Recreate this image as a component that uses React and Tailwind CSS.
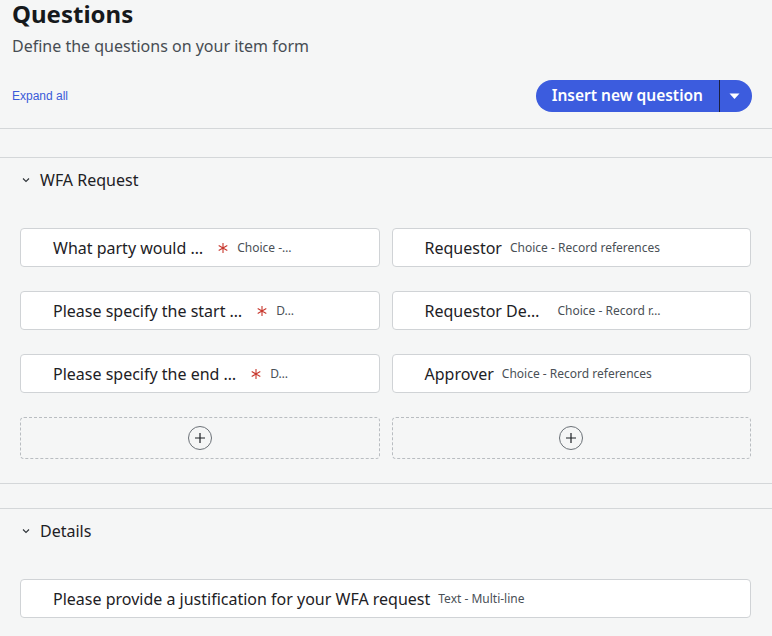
import React from "react";

const wfaQuestions = [
    { label: "What party would …", required: true, type: "Choice -…" },
    { label: "Requestor", required: false, type: "Choice - Record references" },
    { label: "Please specify the start …", required: true, type: "D…" },
    { label: "Requestor De…", required: false, type: "Choice - Record r…", wide: true },
    { label: "Please specify the end …", required: true, type: "D…" },
    { label: "Approver", required: false, type: "Choice - Record references" },
];

const Chevron = () => (
    <svg width="10" height="10" viewBox="0 0 10 10" className="text-[#2e3338]">
        <path d="M2 3.5 L5 6.5 L8 3.5" fill="none" stroke="currentColor" strokeWidth="1.1" />
    </svg>
);

// thin six-armed required marker
const Required = () => (
    <svg width="10" height="10" viewBox="0 0 10 10" className="ml-[15px] shrink-0">
        <path d="M5 0 V10 M0.7 2.5 L9.3 7.5 M0.7 7.5 L9.3 2.5" stroke="#c8372d" strokeWidth="1.1" />
    </svg>
);

const QuestionCard = ({ q }) => (
    <div className="h-[39px] flex items-center pl-[32px] pr-3 bg-white border border-[#d0d3d6] rounded-[4px]">
        <span className="text-[16px] text-[#1d2125] whitespace-nowrap">{q.label}</span>
        {q.required && <Required />}
        <span className={`${q.wide ? "ml-[18px]" : q.required ? "ml-[9px]" : "ml-2"} text-[12px] text-[#4a5056] whitespace-nowrap`}>{q.type}</span>
    </div>
);

const AddBox = () => (
    <div className="h-[42px] flex items-center justify-center border border-dashed border-[#b9bdc1] rounded-[4px]">
        <div className="w-6 h-6 rounded-full border border-[#6b7177] flex items-center justify-center">
            <svg width="12" height="12" viewBox="0 0 12 12">
                <path d="M6 1 V11 M1 6 H11" stroke="#1d2125" strokeWidth="1.2" />
            </svg>
        </div>
    </div>
);

const SectionHeader = ({ title }) => (
    <div className="flex items-center pl-[21px] pt-[10px] h-[34px]">
        <Chevron />
        <span className="ml-[9px] text-[16px] leading-6 text-[#1d2125]">{title}</span>
    </div>
);

export default function App() {
    return (
        <div className="w-[772px] h-[636px] overflow-hidden bg-[#f5f6f6] font-['Noto_Sans',sans-serif]">
            <div className="pl-3 pr-5 border-b border-[#d4d7d9] pb-4">
                <h1 className="text-[24px] leading-7 font-bold text-[#16191c]">Questions</h1>
                <p className="mt-2 text-[16px] leading-5 text-[#474d53]">Define the questions on your item form</p>
                <div className="mt-6 flex items-center justify-between h-8">
                    <a className="text-[12px] text-[#3a5bd9] font-['Liberation_Sans',sans-serif]">Expand all</a>
                    <div className="flex items-center h-8 rounded-full bg-[#3c5cde] text-white">
                        <span className="pl-4 pr-4 text-[15.5px] font-semibold">Insert new question</span>
                        <span className="w-px h-8 bg-[#1b2040]" />
                        <span className="w-8 flex items-center justify-center pr-1">
                            <svg width="11" height="7" viewBox="0 0 11 7">
                                <path d="M0.5 0.5 H10.5 L5.5 6 Z" fill="white" />
                            </svg>
                        </span>
                    </div>
                </div>
            </div>

            <div className="h-[28px]" />

            <section className="border-t border-b border-[#d4d7d9] pb-6">
                <SectionHeader title="WFA Request" />
                <div className="mt-[36px] pl-5 pr-[21px] grid grid-cols-2 gap-x-3 gap-y-6">
                    {wfaQuestions.map((q, i) => (
                        <QuestionCard key={i} q={q} />
                    ))}
                    <AddBox />
                    <AddBox />
                </div>
            </section>

            <div className="h-[24px]" />

            <section className="border-t border-[#d4d7d9]">
                <SectionHeader title="Details" />
                <div className="mt-[36px] pl-5 pr-[21px]">
                    <QuestionCard q={{ label: "Please provide a justification for your WFA request", type: "Text - Multi-line" }} />
                </div>
            </section>
        </div>
    );
}
